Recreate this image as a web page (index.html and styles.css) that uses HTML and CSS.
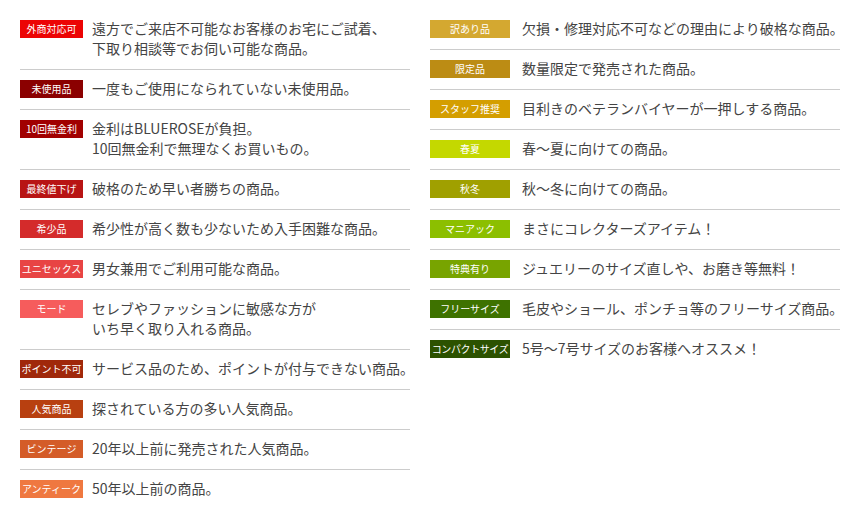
FILE: index.html
```html
<!DOCTYPE html>
<html lang="ja">
<head>
<meta charset="utf-8">
<title>アイコン説明</title>
<link rel="stylesheet" href="styles.css">
</head>
<body>
<div class="legend">
  <ul class="col col-left">
    <li class="row"><span class="badge c-gaisho">外商対応可</span><p class="desc">遠方でご来店不可能なお客様のお宅にご試着、<br>下取り相談等でお伺い可能な商品。</p></li>
    <li class="row"><span class="badge c-mishiyo">未使用品</span><p class="desc">一度もご使用になられていない未使用品。</p></li>
    <li class="row"><span class="badge c-muri">10回無金利</span><p class="desc">金利はBLUEROSEが負担。<br>10回無金利で無理なくお買いもの。</p></li>
    <li class="row"><span class="badge c-nesage">最終値下げ</span><p class="desc">破格のため早い者勝ちの商品。</p></li>
    <li class="row"><span class="badge c-kisho">希少品</span><p class="desc">希少性が高く数も少ないため入手困難な商品。</p></li>
    <li class="row"><span class="badge c-unisex">ユニセックス</span><p class="desc">男女兼用でご利用可能な商品。</p></li>
    <li class="row"><span class="badge c-mode">モード</span><p class="desc">セレブやファッションに敏感な方が<br>いち早く取り入れる商品。</p></li>
    <li class="row"><span class="badge c-point">ポイント不可</span><p class="desc">サービス品のため、ポイントが付与できない商品。</p></li>
    <li class="row"><span class="badge c-ninki">人気商品</span><p class="desc">探されている方の多い人気商品。</p></li>
    <li class="row"><span class="badge c-vintage">ビンテージ</span><p class="desc">20年以上前に発売された人気商品。</p></li>
    <li class="row"><span class="badge c-antique">アンティーク</span><p class="desc">50年以上前の商品。</p></li>
  </ul>
  <ul class="col col-right">
    <li class="row"><span class="badge c-wake">訳あり品</span><p class="desc">欠損・修理対応不可などの理由により破格な商品。</p></li>
    <li class="row"><span class="badge c-gentei">限定品</span><p class="desc">数量限定で発売された商品。</p></li>
    <li class="row"><span class="badge c-staff">スタッフ推奨</span><p class="desc">目利きのベテランバイヤーが一押しする商品。</p></li>
    <li class="row"><span class="badge c-haru">春夏</span><p class="desc">春～夏に向けての商品。</p></li>
    <li class="row"><span class="badge c-aki">秋冬</span><p class="desc">秋～冬に向けての商品。</p></li>
    <li class="row"><span class="badge c-mania">マニアック</span><p class="desc">まさにコレクターズアイテム！</p></li>
    <li class="row"><span class="badge c-tokuten">特典有り</span><p class="desc">ジュエリーのサイズ直しや、お磨き等無料！</p></li>
    <li class="row"><span class="badge c-free">フリーサイズ</span><p class="desc">毛皮やショール、ポンチョ等のフリーサイズ商品。</p></li>
    <li class="row"><span class="badge c-compact badge-tight">コンパクトサイズ</span><p class="desc">5号～7号サイズのお客様へオススメ！</p></li>
  </ul>
</div>
</body>
</html>
```
FILE: styles.css
```css
html, body {
  margin: 0;
  padding: 0;
  background: #ffffff;
}

body {
  font-family: "Noto Sans CJK JP", "Noto Sans", "DejaVu Sans", sans-serif;
  color: #444444;
}

.legend {
  display: flex;
  align-items: flex-start;
  gap: 20px;
  padding: 10px 20px 0 20px;
}

.col {
  list-style: none;
  margin: 0;
  padding: 0;
}

.col-left { width: 390px; }
.col-right { width: 410px; }

.row {
  display: flex;
  align-items: flex-start;
  padding: 10px 0 9px 0;
  border-bottom: 1px solid #cccccc;
}

.row:last-child {
  border-bottom: none;
}

.badge {
  flex: none;
  height: 18px;
  line-height: 18px;
  font-size: 10px;
  color: #ffffff;
  text-align: center;
  white-space: nowrap;
  overflow: hidden;
}

.badge-tight {
  letter-spacing: -0.4px;
}

.col-left .badge {
  width: 63px;
  margin-right: 9px;
}

.col-right .badge {
  width: 80px;
  margin-right: 12px;
}

.desc {
  margin: -2px 0 2px 0;
  font-size: 14px;
  line-height: 20px;
  white-space: nowrap;
}

.c-gaisho  { background: #ec0404; }
.c-mishiyo { background: #8b0000; }
.c-muri    { background: #a10000; }
.c-nesage  { background: #b81414; }
.c-kisho   { background: #d42b2b; }
.c-unisex  { background: #e84444; }
.c-mode    { background: #f65c5c; }
.c-point   { background: #a0280a; }
.c-ninki   { background: #b84010; }
.c-vintage { background: #d45c28; }
.c-antique { background: #ef7840; }

.c-wake    { background: #d4a830; }
.c-gentei  { background: #bc8c14; }
.c-staff   { background: #d49e00; }
.c-haru    { background: #c4d800; }
.c-aki     { background: #a0a000; }
.c-mania   { background: #8cbf00; }
.c-tokuten { background: #78a400; }
.c-free    { background: #3e7200; }
.c-compact { background: #2c5200; }
```
